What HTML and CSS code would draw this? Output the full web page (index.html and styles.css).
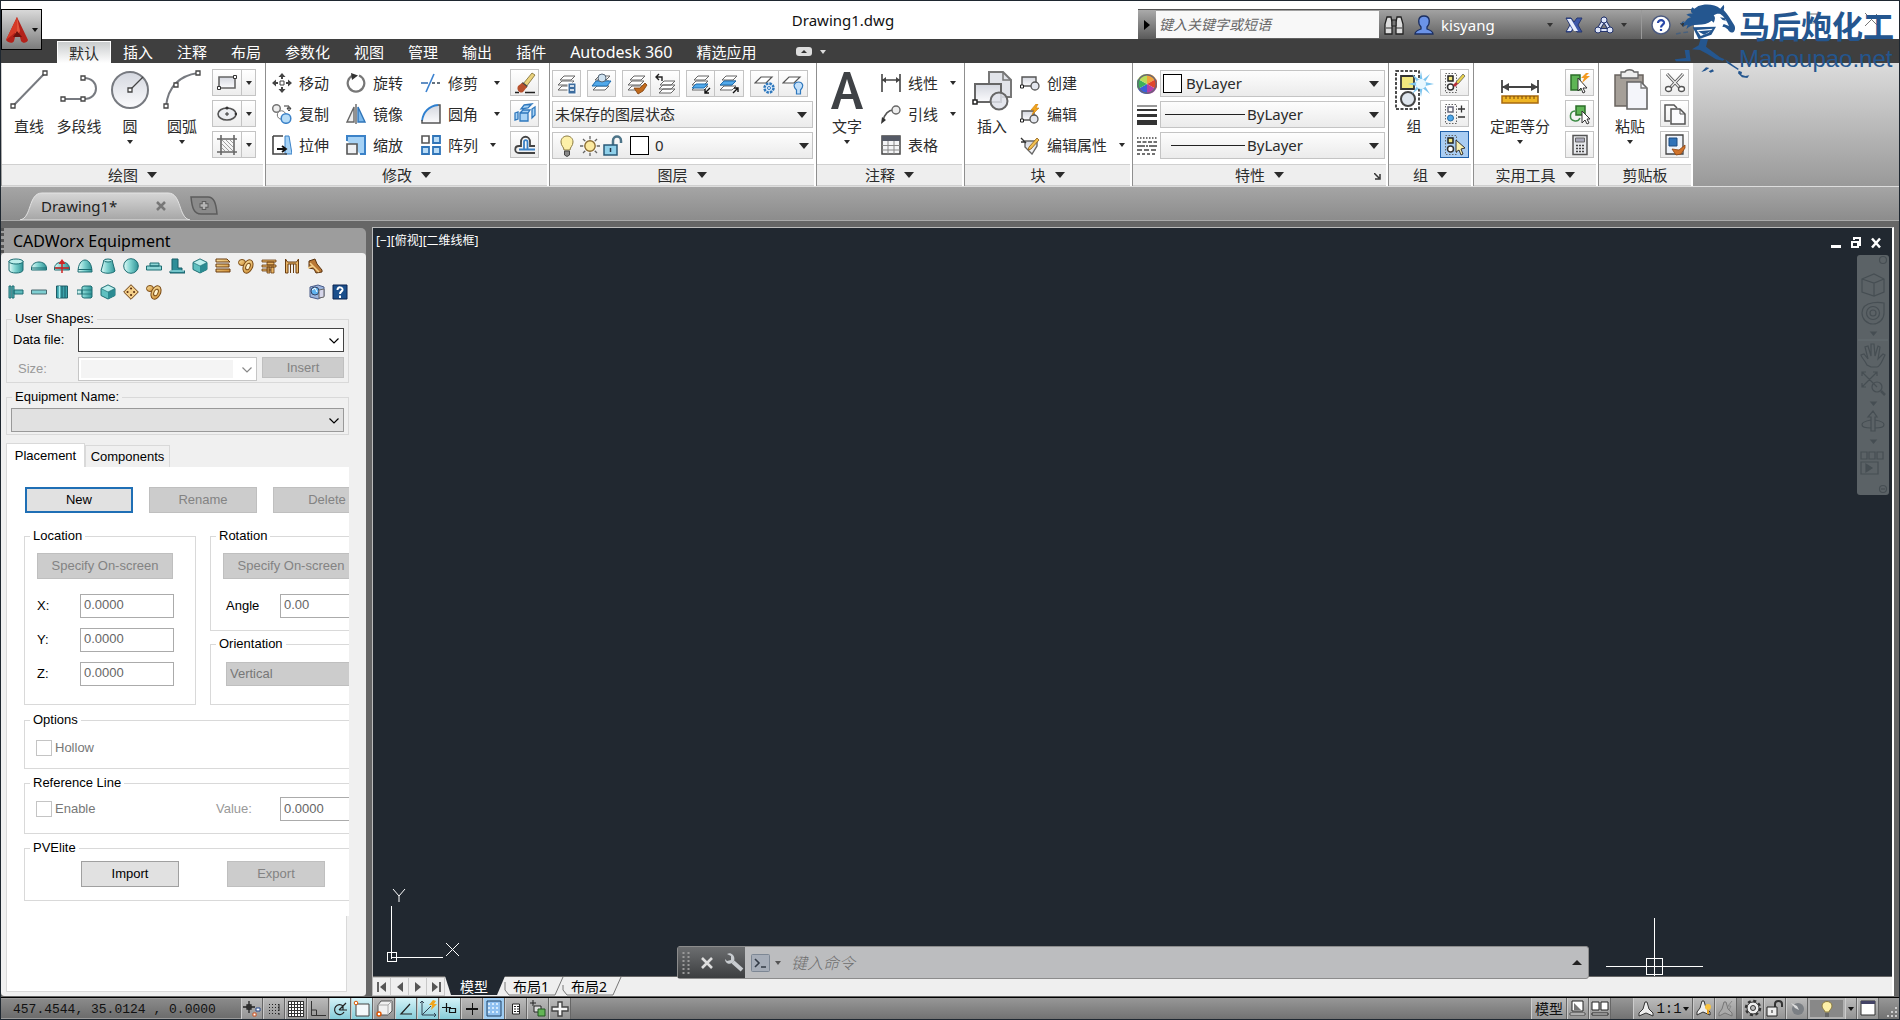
FILE: index.html
```html
<!DOCTYPE html>
<html lang="zh-CN">
<head>
<meta charset="utf-8">
<title>Drawing1.dwg</title>
<link rel="stylesheet" href="styles.css">
</head>
<body>
<svg class="sprite" aria-hidden="true">
<defs>
<linearGradient id="g-gray" x1="0" y1="0" x2="0" y2="1"><stop offset="0" stop-color="#d4d7df"/><stop offset="1" stop-color="#fbfbfd"/></linearGradient>
<linearGradient id="g-teal" x1="0" y1="0" x2="1" y2="0"><stop offset="0" stop-color="#e4fbf8"/><stop offset=".45" stop-color="#7fd3d0"/><stop offset="1" stop-color="#2f9396"/></linearGradient>
<linearGradient id="g-gold" x1="0" y1="0" x2="1" y2="1"><stop offset="0" stop-color="#fbe2a0"/><stop offset="1" stop-color="#cf8d33"/></linearGradient>
<symbol id="down" viewBox="0 0 8 6"><path d="M1 1h6L4 5z" fill="currentColor"/></symbol>
<symbol id="down-lg" viewBox="0 0 10 6"><path d="M0 0h10L5 6z" fill="currentColor"/></symbol>
<symbol id="chev" viewBox="0 0 10 6"><path d="M.5 .5 5 5 9.500 .5" fill="none" stroke="currentColor" stroke-width="1.200"/></symbol>
<symbol id="line" viewBox="0 0 40 42"><path d="M4 37 36 4" stroke="#777a80" stroke-width="2"/><g fill="#fff" stroke="#444" stroke-width="1.300"><path d="M2 35h4v4H2zM34 2h4v4h-4z"/></g></symbol>
<symbol id="pline" viewBox="0 0 40 42"><path d="M4 30h21c16 0 16-21 0-21" fill="none" stroke="#777a80" stroke-width="2"/><g fill="#fff" stroke="#444" stroke-width="1.300"><path d="M2 28h4v4H2zM22 28h4v4h-4zM22 7h4v4h-4z"/></g></symbol>
<symbol id="circle" viewBox="0 0 40 42"><circle cx="20" cy="21" r="18" fill="url(#g-gray)" stroke="#777a80" stroke-width="2"/><path d="M20 21 33 8" stroke="#444" stroke-width="1.300"/><path d="M18 19h4v4h-4z" fill="#fff" stroke="#444" stroke-width="1.300"/></symbol>
<symbol id="arc" viewBox="0 0 40 42"><path d="M4 37C6 20 15 7 36 4" fill="none" stroke="#777a80" stroke-width="2"/><g fill="#fff" stroke="#444" stroke-width="1.300"><path d="M2 35h4v4H2zM12 14h4v4h-4zM34 2h4v4h-4z"/></g></symbol>
<symbol id="rect" viewBox="0 0 20 20"><path d="M2 4h16v11H2z" fill="url(#g-gray)" stroke="#666" stroke-width="1.600"/><g fill="#fff" stroke="#333"><path d="M.5 13.500h3v3h-3zM16.500 2.500h3v3h-3z"/></g></symbol>
<symbol id="ellipse" viewBox="0 0 20 20"><ellipse cx="10" cy="10" rx="9" ry="6" fill="#eceef2" stroke="#555" stroke-width="1.600"/><path d="M8 10h4M10 8v4" stroke="#333"/><g fill="#333"><circle cx="10" cy="4" r="1.600"/><circle cx="19" cy="10" r="1.400"/></g></symbol>
<symbol id="hatch" viewBox="0 0 20 20"><path d="M4 0v20M0 4h20M17 0v20M0 17h20" stroke="#666" stroke-width="1.600"/><path d="M5 5l11 11M5 9l7 7M5 13l3 3M9 5l7 7M13 5l3 3" stroke="#888" stroke-width=".8"/></symbol>
<symbol id="move" viewBox="0 0 20 20"><path d="M10 0l3.500 4h-7zM10 20l3.500-4h-7zM0 10l4-3.500v7zM20 10l-4-3.500v7z" fill="#444"/><path d="M10 3v3M10 14v3M3 10h3M14 10h3" stroke="#444" stroke-width="2"/><path d="M8 8h4v4H8z" fill="#fff" stroke="#444"/></symbol>
<symbol id="rotate" viewBox="0 0 20 20"><path d="M7 2.500A8.300 8.300 0 1 0 13 2.500" fill="none" stroke="#777" stroke-width="2.200"/><path d="M5 0l7 2.500L6 7z" fill="#333"/></symbol>
<symbol id="trim" viewBox="0 0 20 20"><path d="M0 10h7" stroke="#2f6bb0" stroke-width="1.500"/><path d="M5 19 13 1" stroke="#3b82d0" stroke-width="1.600"/><path d="M11 10h9" stroke="#345" stroke-width="1.500" stroke-dasharray="3 2"/></symbol>
<symbol id="copy" viewBox="0 0 20 20"><circle cx="4.500" cy="4.500" r="3.800" fill="#eee" stroke="#777" stroke-width="1.500"/><circle cx="9.500" cy="11" r="4.200" fill="#fff" stroke="#777"/><circle cx="14" cy="14.500" r="4.800" fill="#b6dcf7" stroke="#3b82c8" stroke-width="1.500"/><path d="M12 2h5v3m-2-1h4l-2 3z" fill="none" stroke="#333"/></symbol>
<symbol id="mirror" viewBox="0 0 20 20"><path d="M8 3v15H1z" fill="#eee" stroke="#666" stroke-width="1.400"/><path d="M12 3v15h7z" fill="#7db9ec" stroke="#2f74b8" stroke-width="1.400"/><path d="M10 0v20" stroke="#222"/></symbol>
<symbol id="fillet" viewBox="0 0 20 20"><path d="M1 19V17C2 8 8 2 17 1h2v18z" fill="url(#g-gray)"/><path d="M1 17C2 8 8 2 17 1" fill="none" stroke="#2f80d0" stroke-width="1.800"/><path d="M17 1h2v18H1v-3" fill="none" stroke="#555" stroke-width="1.500"/></symbol>
<symbol id="stretch" viewBox="0 0 20 20"><path d="M13 1h4l3 18h-7z" fill="#a6d2f5" stroke="#3b82c8"/><path d="M1 1h10M1 1v18h14" fill="none" stroke="#444" stroke-width="1.600"/><path d="M5 14h8m-3-3 4 3-4 3" fill="none" stroke="#111" stroke-width="1.800"/></symbol>
<symbol id="scale" viewBox="0 0 20 20"><path d="M1 6V1h18v18h-5" fill="#a6d2f5" stroke="#3b82c8" stroke-width="2"/><path d="M1 9h10v10H1z" fill="#eef0f3" stroke="#555" stroke-width="1.600"/></symbol>
<symbol id="array" viewBox="0 0 20 20"><path d="M1 1h7v7H1z" fill="#fff" stroke="#555" stroke-width="1.600"/><path d="M12 1h7v7h-7zM1 12h7v7H1zM12 12h7v7h-7z" fill="#b9dcf7" stroke="#2f74b8" stroke-width="1.800"/></symbol>
<symbol id="erase" viewBox="0 0 22 22"><path d="M9 12 18 1l3 2-9 12z" fill="#ead27c" stroke="#7a6a30" stroke-width=".8"/><path d="M8 11l5 4" stroke="#444" stroke-width="2.500"/><path d="M4 14l4-3 5 4-4 5c-3 2-7-2-5-6z" fill="#b8502c"/><path d="M1 20.500h4M11 20.500h10" stroke="#222" stroke-width="1.300"/></symbol>
<symbol id="explode" viewBox="0 0 22 22"><g fill="#a9d4f6" stroke="#2f78bd" stroke-width="1.300"><path d="M6 10h8v8H6zM6 10l3-3h7l-2 3M10 2l8-1-4 4-7 1zM18 6l3-2v8l-3 3zM1 10l3-1v7l-3 1z"/></g></symbol>
<symbol id="offset" viewBox="0 0 22 22"><path d="M21 19H5c-5 0-5-7 0-7h2V8c0-7 9-7 9 0v4h5" fill="none" stroke="#444" stroke-width="1.800"/><path d="M21 15.500H5M10 15V8c0-2.500 3.500-2.500 3.500 0v7" fill="none" stroke="#3b82c8" stroke-width="1.800"/></symbol>
<symbol id="lay" viewBox="0 0 22 22"><g fill="#fff" stroke="#666"><path d="M2 17l4-4h12l-4 4zM2 12l4-4h12l-4 4zM4 7l4-4h11l-4 4z"/></g></symbol>
<symbol id="layprop" viewBox="0 0 22 22"><use href="#lay"/><path d="M12 10h8v11h-8z" fill="#3c6c9e" stroke="#fff"/><path d="M14 13h4M14 17h4" stroke="#fff" stroke-width="1.500"/></symbol>
<symbol id="laycur" viewBox="0 0 22 22"><use href="#lay"/><path d="M1 13l4-5h15l-4 5z" fill="#51a9ea" stroke="#1f6cae"/><circle cx="11" cy="5" r="4" fill="#cfe2f0" stroke="#567"/></symbol>
<symbol id="laymatch" viewBox="0 0 22 22"><use href="#lay"/><path d="M8 15l6 0 5-5 2 2-4 6-5 3z" fill="#c06a1d" stroke="#7d3d0a" stroke-width=".8"/></symbol>
<symbol id="layprev" viewBox="0 0 22 22"><g fill="#fff" stroke="#666"><path d="M5 20l4-4h12l-4 4zM5 16l4-4h12l-4 4zM6 12l4-4h11l-4 4z"/></g><path d="M8 8V4H2m3-3L2 4l3 3" fill="none" stroke="#222" stroke-width="1.400"/></symbol>
<symbol id="layiso" viewBox="0 0 22 22"><use href="#lay"/><path d="M2 15l4-4h12l-4 4z" fill="#51a9ea" stroke="#1f6cae"/><path d="M20 15l-5 5m0-4v4h4" fill="none" stroke="#111" stroke-width="1.400"/></symbol>
<symbol id="layuniso" viewBox="0 0 22 22"><use href="#lay"/><path d="M2 12l4-4h12l-4 4z" fill="#51a9ea" stroke="#1f6cae"/><path d="M15 20l5-5m-4 0h4v4" fill="none" stroke="#111" stroke-width="1.400"/></symbol>
<symbol id="layfrz" viewBox="0 0 22 22"><path d="M1 10l6-6h11l-6 6z" fill="#fff" stroke="#555" stroke-width="1.200"/><circle cx="15" cy="15" r="4.500" fill="#dcecfb" stroke="#2f78bd" stroke-width="2.500" stroke-dasharray="2.500 1"/><circle cx="15" cy="15" r="1.500" fill="#fff" stroke="#2f78bd"/></symbol>
<symbol id="layoff" viewBox="0 0 22 22"><path d="M1 10l6-6h11l-6 6z" fill="#fff" stroke="#555" stroke-width="1.200"/><path d="M14.500 17c-5-5-1-8 2-8 4 0 6 4 2 8v4h-4z" fill="#c3e0fa" stroke="#2f78bd" stroke-width="1.200"/></symbol>
<symbol id="bulb" viewBox="0 0 20 22"><path d="M7 15c0-3-3-4-3-8 0-8 12-8 12 0 0 4-3 5-3 8z" fill="#fdf0a8" stroke="#8a7a40"/><path d="M7.500 16h5v4l-2.500 1.500L7.500 20z" fill="#888" stroke="#444"/></symbol>
<symbol id="sun" viewBox="0 0 20 20"><path d="M10 0v20M0 10h20M3 3l14 14M17 3 3 17" stroke="#666" stroke-width="1.300"/><circle cx="10" cy="10" r="6.800" fill="#fff"/><circle cx="10" cy="10" r="5.200" fill="#fbe9a0" stroke="#8b6d33" stroke-width="1.400"/></symbol>
<symbol id="lock" viewBox="0 0 20 22"><path d="M10 10V6c0-6 8-6 8 0v2" fill="none" stroke="#4d7488" stroke-width="2.500"/><path d="M1 10h13v10H1z" fill="#8fd0ea" stroke="#2a5a78" stroke-width="1.500"/><path d="M7.500 13v4" stroke="#234" stroke-width="1.500"/></symbol>
<symbol id="bigA" viewBox="0 0 40 42"><path d="M4 40 17 3h6l13 37h-7l-3-10H14l-3 10zM15.500 25h9L20 10z" fill="#3f4246"/></symbol>
<symbol id="dimlin" viewBox="0 0 20 20"><path d="M1 1v18M19 1v18M1 7h18" stroke="#444" stroke-width="1.600"/><path d="M1 7l4-3v6zM19 7l-4-3v6z" fill="#444"/></symbol>
<symbol id="leader" viewBox="0 0 20 20"><path d="M2 17C3 10 8 6 12 6" fill="none" stroke="#555" stroke-width="1.600"/><circle cx="15" cy="6" r="4" fill="#eee" stroke="#666" stroke-width="1.400"/><path d="M0 20l1-7 4 3z" fill="#333"/></symbol>
<symbol id="table" viewBox="0 0 20 20"><path d="M1 1h18v18H1z" fill="#f4f5f7" stroke="#444" stroke-width="1.500"/><path d="M1 1h18v5H1z" fill="#555a66"/><path d="M7 6v13M13 6v13M1 10.500h18M1 15h18" stroke="#888"/></symbol>
<symbol id="insert" viewBox="0 0 40 42"><path d="M17 3h14l8 8v17H17z" fill="#e2e4ea" stroke="#777" stroke-width="2"/><path d="M31 3v8h8" fill="none" stroke="#777" stroke-width="1.500"/><path d="M3 15h26v18H3z" fill="url(#g-gray)" stroke="#666" stroke-width="2"/><circle cx="27" cy="32" r="8.500" fill="#dfe2ea" fill-opacity=".85" stroke="#666" stroke-width="2"/><path d="M1 31h4v4H1z" fill="#fff" stroke="#222" stroke-width="1.500"/></symbol>
<symbol id="bcreate" viewBox="0 0 20 20"><path d="M2 4h14v9H2z" fill="url(#g-gray)" stroke="#555" stroke-width="1.400"/><circle cx="15" cy="13" r="4" fill="#e4e7ee" stroke="#555" stroke-width="1.300"/><path d="M.5 12h3v3h-3z" fill="#fff" stroke="#222"/></symbol>
<symbol id="bedit" viewBox="0 0 20 20"><path d="M2 7h12v9H2z" fill="url(#g-gray)" stroke="#555" stroke-width="1.400"/><circle cx="14" cy="15" r="4" fill="#e4e7ee" stroke="#555" stroke-width="1.300"/><path d="M16 0l-5 6h3l-2 5 7-7h-3l2-4z" fill="#f2a51d" stroke="#c77a0a" stroke-width=".6"/><path d="M.5 15h3v3h-3z" fill="#fff" stroke="#222"/></symbol>
<symbol id="battr" viewBox="0 0 20 20"><path d="M5 6h12v5l-5 8-7-7z" fill="url(#g-gray)" stroke="#666" stroke-width="1.400"/><path d="M1 3l5 5M1 7l4 0" stroke="#333" stroke-width="1.400"/><path d="M9 12l8-9 2 2-8 9-3 1z" fill="#f2c050" stroke="#8b5a10" stroke-width=".8"/></symbol>
<symbol id="wheel" viewBox="0 0 20 20"><path d="M10 10V0a10 10 0 0 1 9 5z" fill="#f0a23c"/><path d="M10 10l9-5a10 10 0 0 1 0 10z" fill="#e0452c"/><path d="M10 10l9 5a10 10 0 0 1-9 5z" fill="#b13fa8"/><path d="M10 10v10a10 10 0 0 1-9-5z" fill="#3c60d8"/><path d="M10 10l-9 5A10 10 0 0 1 1 5z" fill="#3cb05a"/><path d="M10 10 1 5a10 10 0 0 1 9-5z" fill="#b9dc5b"/><circle cx="10" cy="10" r="9.300" fill="none" stroke="#667" stroke-width="1.400"/></symbol>
<symbol id="lweight" viewBox="0 0 20 20"><path d="M0 .5h20v1H0zM0 4h20v2H0zM0 9h20v3H0zM0 15h20v5H0z" fill="#333"/></symbol>
<symbol id="ltype" viewBox="0 0 20 20"><g stroke="#444" stroke-width="1.500"><path d="M0 2h20" stroke-dasharray="1.500 1.500"/><path d="M0 6h20" stroke-dasharray="4 1.500"/><path d="M0 10h20" stroke-dasharray="8 1 2 1"/><path d="M0 14h20" stroke-dasharray="5 2"/><path d="M0 18h20" stroke-dasharray="3 2"/></g></symbol>
<symbol id="group" viewBox="0 0 40 42"><path d="M2 2h23v38H2z" fill="none" stroke="#111" stroke-width="1.500" stroke-dasharray="3 1.500"/><path d="M7 7h13v13H7z" fill="#f2e77d" stroke="#333" stroke-width="1.800"/><circle cx="14" cy="30" r="7" fill="#dfe6ee" stroke="#444" stroke-width="2"/><path d="M27 2l1.500 9L36 5l-5 8 9 2-9 2 5 8-7.500-6L27 28l-1.500-9-7.500 6 5-8-9-2 9-2-5-8 7.500 6z" fill="#7cc4ee"/><circle cx="27" cy="15" r="5" fill="#e9f8ff"/></symbol>
<symbol id="gbase" viewBox="0 0 22 22"><path d="M1.500 1.500h11v19h-11z" fill="none" stroke="#666" stroke-dasharray="1.500 1.500"/><path d="M4 4h5v5H4z" fill="#f2e77d" stroke="#222" stroke-width="1.500"/><circle cx="6.500" cy="15" r="3" fill="#fff" stroke="#333" stroke-width="1.500"/></symbol>
<symbol id="gun" viewBox="0 0 22 22"><use href="#gbase"/><path d="M12 10l7-8 2 2-7 8z" fill="#e9d24b" stroke="#665" stroke-width=".8"/><path d="M9 13l3-3 2 2-3 3z" fill="#b8303a"/></symbol>
<symbol id="gedit" viewBox="0 0 22 22"><path d="M1.500 1.500h11v19h-11z" fill="none" stroke="#666" stroke-dasharray="1.500 1.500"/><path d="M4 4h5v5H4z" fill="#fff" stroke="#667" stroke-width="1.500"/><circle cx="6.500" cy="15" r="3" fill="#4fa8ea" stroke="#27699e"/><path d="M14 6h7M17.500 2.500v7M14 14h7" stroke="#333" stroke-width="1.300"/></symbol>
<symbol id="gsel" viewBox="0 0 22 22"><use href="#gbase"/><path d="M12 6v12l3-2 2 5 2-1-2-5 4-1z" fill="#f7efb0" stroke="#333"/></symbol>
<symbol id="measure" viewBox="0 0 40 42"><path d="M2 11v13M38 11v13M2 18h36" stroke="#444" stroke-width="1.800"/><path d="M2 18l7-4v8zM38 18l-7-4v8z" fill="#444"/><path d="M2 27h36v7H2z" fill="#efb524" stroke="#a8690f" stroke-width="1.500"/><path d="M6 27v3M10 27v3M14 27v3M18 27v3M22 27v3M26 27v3M30 27v3M34 27v3" stroke="#7a4a08"/></symbol>
<symbol id="qsel" viewBox="0 0 22 22"><path d="M2 3h9v15H2z" fill="#5fb556" stroke="#2d6e2a" stroke-width="1.500"/><path d="M9 6v13l3-3 2 5 2-1-2-4h4z" fill="#fff" stroke="#333"/><path d="M17 1l-5 5h3l-2 5 8-7h-4l3-3z" fill="#f39a1f"/></symbol>
<symbol id="selsim" viewBox="0 0 22 22"><path d="M7 3h9v9H7z" fill="#5fb556" stroke="#2d6e2a" stroke-width="1.500"/><path d="M6 8a5 5 0 1 0 5 7" fill="none" stroke="#3f8d48" stroke-width="1.500"/><path d="M13 8v12l3-3 2 4 2-1-2-4h3z" fill="#fff" stroke="#333"/></symbol>
<symbol id="calc" viewBox="0 0 22 22"><path d="M4 1.500h14v19H4z" fill="#e8eaee" stroke="#555" stroke-width="1.500"/><path d="M6.500 4h9v4h-9z" fill="#aab" stroke="#666"/><path d="M7 11.500h8M7 14.500h8M7 17.500h8" stroke="#444" stroke-width="1.600" stroke-dasharray="2 1"/></symbol>
<symbol id="paste" viewBox="0 0 40 42"><path d="M5 6h28v31H5z" fill="#a59f98" stroke="#69645f" stroke-width="1.500"/><path d="M11 3h4c1-3 8-3 9 0h4v6H11z" fill="#eee" stroke="#666" stroke-width="1.300"/><path d="M17 13h14l6 6v21H17z" fill="#f4f5fa" stroke="#666" stroke-width="1.600"/><path d="M31 13v6h6" fill="none" stroke="#777" stroke-width="1.300"/></symbol>
<symbol id="cut" viewBox="0 0 22 22"><path d="M3 2l13 14M19 2 6 16" stroke="#555" stroke-width="3"/><path d="M3 2l13 14M19 2 6 16" stroke="#eee" stroke-width="1.200"/><ellipse cx="4.500" cy="17" rx="3" ry="2.500" fill="#fff" stroke="#555" stroke-width="1.300"/><ellipse cx="17.500" cy="17" rx="3" ry="2.500" fill="#fff" stroke="#555" stroke-width="1.300"/></symbol>
<symbol id="copydoc" viewBox="0 0 22 22"><path d="M6 18H1V2h9l3 3" fill="none" stroke="#555" stroke-width="1.500"/><path d="M7 6h9l5 5v10H7z" fill="#fbfbfd" stroke="#555" stroke-width="1.500"/><path d="M16 6v5h5" fill="none" stroke="#555"/></symbol>
<symbol id="matchp" viewBox="0 0 22 22"><path d="M2 1h17v19H2z" fill="#eef3fa" stroke="#444" stroke-width="1.300"/><path d="M5 4h8v8H5z" fill="#2f72b8" stroke="#1c4b80"/><path d="M8 15l7 1 6-5v3l-4 6-5 1z" fill="#d0732a" stroke="#8b4210" stroke-width=".8"/></symbol>
<symbol id="cyl" viewBox="0 0 16 16"><path d="M1 3v9c0 4 14 4 14 0V3z" fill="url(#g-teal)" stroke="#1d6d72"/><ellipse cx="8" cy="3.500" rx="7" ry="2.500" fill="#bdeeeb" stroke="#1d6d72"/></symbol>
<symbol id="head" viewBox="0 0 16 16"><path d="M.5 10C1 2 15 2 15.500 10v2H.5z" fill="url(#g-teal)" stroke="#1d6d72"/><path d="M1 10h14" stroke="#1d6d72"/></symbol>
<symbol id="headred" viewBox="0 0 16 16"><use href="#head"/><path d="M8 15V3M1 10h14" stroke="#d02424" stroke-width="1.500"/><path d="M8 1 4.500 6h7z" fill="#d02424"/></symbol>
<symbol id="dome" viewBox="0 0 16 16"><path d="M1 14C1-2 15-2 15 14z" fill="url(#g-teal)" stroke="#1d6d72"/><path d="M1 11.500h14" stroke="#1d6d72"/></symbol>
<symbol id="cone" viewBox="0 0 16 16"><path d="M4 2h8l3 11c-2 3-12 3-14 0z" fill="url(#g-teal)" stroke="#1d6d72"/><ellipse cx="8" cy="2.500" rx="4" ry="1.500" fill="#bdeeeb" stroke="#1d6d72"/></symbol>
<symbol id="ball" viewBox="0 0 16 16"><circle cx="8" cy="8" r="7.300" fill="url(#g-teal)" stroke="#1d6d72"/></symbol>
<symbol id="flat" viewBox="0 0 16 16"><path d="M4 5h9v3H4zM.5 8h15v4H.5z" fill="#8fd6d6" stroke="#1d6d72"/></symbol>
<symbol id="base" viewBox="0 0 16 16"><path d="M3 1h6v9h4v3h3v2H1v-2h2z" fill="#2f8e98" stroke="#165d66"/><path d="M1 13h14" stroke="#bff"/></symbol>
<symbol id="box" viewBox="0 0 16 16"><path d="M1 4.500 8 1l7 3.500v7L8 15l-7-3.500z" fill="#5fc0c0" stroke="#1d6d72"/><path d="M8 8l7-3.500v7L8 15z" fill="#2b8b92"/><path d="M1 4.500 8 8l7-3.500L8 1z" fill="#bff0ee" stroke="#1d6d72" stroke-width=".7"/></symbol>
<symbol id="coil" viewBox="0 0 16 16"><path d="M1 1h11l3 3H1zM1 6h13v3H1zM1 11h14v3H1z" fill="url(#g-gold)" stroke="#6a3d10"/></symbol>
<symbol id="nozzle" viewBox="0 0 16 16"><ellipse cx="4" cy="4.500" rx="3.500" ry="3" fill="url(#g-gold)" stroke="#7a4a14"/><ellipse cx="10" cy="8.500" rx="4.500" ry="7" transform="rotate(25 10 8.500)" fill="url(#g-gold)" stroke="#7a4a14"/><ellipse cx="10" cy="8.500" rx="2" ry="3.500" transform="rotate(25 10 8.500)" fill="#fff4d0" stroke="#7a4a14"/></symbol>
<symbol id="ladder" viewBox="0 0 16 16"><path d="M1 2h14v2H1zM1 7h14v2H1zM6 4h7v3H6zM6 9h3v6H6zM10 9h3v6h-3zM1 11h8v2H1z" fill="#e8b566" stroke="#6a3d10" stroke-width=".8"/></symbol>
<symbol id="legs" viewBox="0 0 16 16"><path d="M1.500 1v14h2.500V6h8v9h2.500V1l-2 3h-9zM6.500 6v9M9.500 6v9" fill="#e8b566" stroke="#6a3d10"/></symbol>
<symbol id="saddle" viewBox="0 0 16 16"><path d="M2 3l6-2 2 5 5 6v2l-6 1-2-4-5-1z" fill="#b97836" stroke="#5a3410"/><path d="M3 5l9 9M1 10l5-2" stroke="#f3d08c" stroke-width="1.500"/></symbol>
<symbol id="flange" viewBox="0 0 16 16"><path d="M1 2h2v12H1zM4 2h2v12H4zM6 6h9v4H6z" fill="#5fb9bb" stroke="#1d6d72"/></symbol>
<symbol id="pipe" viewBox="0 0 16 16"><path d="M.5 6h15v4H.5z" fill="#7fcfd2" stroke="#4a6a70"/></symbol>
<symbol id="tubes" viewBox="0 0 16 16"><path d="M2.500 2h11v12h-11z" fill="#3aa1aa" stroke="#1d5d66"/><path d="M5.500 2v12" stroke="#aee" stroke-width="1.500"/><path d="M8 2v12M11 2v12" stroke="#1d5d66"/></symbol>
<symbol id="chan" viewBox="0 0 16 16"><path d="M0 6h5v4H0zM5 3l2-1h7l1 1v10l-1 1H7l-2-1z" fill="url(#g-teal)" stroke="#1d6d72"/><path d="M5 6h10M5 10h10" stroke="#1d6d72" stroke-width=".8"/></symbol>
<symbol id="dice" viewBox="0 0 16 16"><path d="M8 .7 15.300 8 8 15.300.7 8z" fill="#f4cf8a" stroke="#6a3d10"/><path d="M8 4.500h.1M8 11h.1M4.500 8h.1M11 8h.1" stroke="#5a3010" stroke-width="2" stroke-linecap="round"/></symbol>
<symbol id="config" viewBox="0 0 16 16"><path d="M1 3l8-2 6 2v9l-6 3-8-2z" fill="#9bb4dc" stroke="#485a88"/><circle cx="6" cy="7" r="4" fill="#5fb2ee" stroke="#346"/><path d="M10 6l5-1v8l-5 1z" fill="#d6d6ea" stroke="#666"/><path d="M3 6l3-2 2 4" stroke="#fff" fill="none"/></symbol>
</defs>
</svg>

<div class="app">
<header class="titlebar">
  <h1>Drawing1.dwg</h1>
  <button class="appbtn" aria-label="应用程序菜单"><svg width="24" height="28" viewBox="0 0 24 28"><path d="M12 1 1 24c2 3 7 4 8 1l1-4h5l1 4c2 3 6 2 7-1z" fill="#b3211a"/><path d="M12 1 9 15l3 6 3-6z" fill="#e2553c"/><path d="M12 1 1 24l11-9z" fill="#d63b28"/><path d="M8 21l4-6 5 6z" fill="#6e120d"/></svg><svg width="8" height="6"><use href="#down"/></svg></button>
  <div class="info">
    <button class="info-toggle" aria-label="展开"><svg width="6" height="10" viewBox="0 0 6 10"><path d="M0 0l6 5-6 5z" fill="#000"/></svg></button>
    <input type="text" class="search" aria-label="搜索" placeholder="键入关键字或短语">
    <button class="bin" aria-label="搜索"><svg width="20" height="20" viewBox="0 0 20 20"><path d="M3 2h4l1 5v12H1V9zM13 2h4l2 7v10h-7V7z" fill="#ddd" stroke="#222" stroke-width="1.300"/><path d="M8 5h4v6H8z" fill="#777" stroke="#222"/><path d="M2 13h6M12 13h6" stroke="#333"/></svg></button>
    <button class="user"><svg width="20" height="20" viewBox="0 0 20 20"><path d="M10 1c7 0 6 8 3 11v2c3 1 6 2 6 5H1c0-3 3-4 6-5v-2C4 9 3 1 10 1z" fill="#6b93e8" stroke="#1c2f60" stroke-width="1.300"/></svg><span>kisyang</span><svg width="8" height="6"><use href="#down"/></svg></button>
    <button class="xchg" aria-label="Exchange"><svg width="18" height="18" viewBox="0 0 18 18"><path d="M1 2h5l3 4 3-4h5l-4 7 4 7h-5l-3-4-3 4H1l4-7z" fill="#3c56a8" stroke="#26366e"/><path d="M2 3h4l7 12h-4z" fill="#e6ecfc"/><path d="M2 15l3-5 2 3-1 2z" fill="#e6ecfc"/></svg></button>
    <button class="a360" aria-label="Autodesk 360"><svg width="20" height="18" viewBox="0 0 20 18"><path d="M10 4 4 14h12z" fill="none" stroke="#26366e" stroke-width="4"/><path d="M10 4 4 14h12z" fill="none" stroke="#dfe6fa" stroke-width="2"/><g fill="#dfe6fa" stroke="#26366e"><circle cx="10" cy="4" r="3"/><circle cx="4" cy="14" r="3"/><circle cx="16" cy="14" r="3"/></g></svg><svg width="8" height="6"><use href="#down"/></svg></button>
    <button class="help" aria-label="帮助"><svg width="20" height="20" viewBox="0 0 20 20"><circle cx="10" cy="10" r="9" fill="#fff" stroke="#4b5a80" stroke-width="1.500"/><path d="M7 8c0-4 6.500-3.500 6 0-.5 2-3 2-3 4.500M10 14v2" fill="none" stroke="#2746a8" stroke-width="2.200"/></svg><svg width="8" height="6"><use href="#down"/></svg></button>
  </div>
  <div class="winbtns"><svg width="70" height="14" viewBox="0 0 70 14"><path d="M1 1h9v9H1zM58 0l13 13M71 0 58 13" fill="none" stroke="#777"/></svg></div>
  <div class="brand">
    <svg class="horse" width="84" height="76" viewBox="15 12 252 228"><g fill="#24568f"><path d="M45 66c6-10 10-12 18-14l-14-8c8-4 14-4 20-2-8-6-8-12-2-20l6 4 12-8c20-8 50-6 66 8l10-12c2 6 2 10 0 16 12 12 20 26 32 46 4 8 2 16-2 20-8 4-14 0-18-8-6-6-10-8-16-8l4-8 16 6c-6-14-14-28-26-36-8-2-14 0-20 4 6 6 4 14 0 22l-6-6c-12 10-26 12-40 12-16 0-28 4-36 14l4-14c-6 2-10 4-14 8l4-16-12 8c2-4 4-6 8-10z"/><path d="M150 52l14 2 4 8-10-2z"/><path d="M68 82l70-2-14 24-38 14zM80 90l12 18 24-10 12-12z" fill-rule="evenodd"/><path d="M84 94l44-4-26 14z"/><path d="M92 116l22 2-6 22 16 12 26 20 14 6-6 4-20-4-26-16-22-12-24-2 20-12zM14 178l34-4-4-24h14l4 34-44 0z"/><path d="M166 178l24 18 16 10-2 4-32-20zM94 216l14-14 10 2-12 8zM116 214l12-6 4 6-10 4zM206 212l10 4-2 8 12 4 12-2-6 8-16-2-12-12z"/></g><path d="M18 102l14-3M40 98l14-2" stroke="#24568f" stroke-width="4" opacity=".5"/></svg>
    <div class="brandtext"><strong>马后炮化工</strong><span>Mahoupao.net</span></div>
  </div>
</header>

<nav class="tabs">
  <button class="on">默认</button><button>插入</button><button>注释</button><button>布局</button><button>参数化</button><button>视图</button><button>管理</button><button>输出</button><button>插件</button><button class="latin">Autodesk 360</button><button>精选应用</button>
  <button class="mini" aria-label="最小化功能区"><svg width="32" height="10" viewBox="0 0 32 10"><rect width="16" height="9" rx="3" fill="#ddd"/><path d="M5 6l3-3 3 3z" fill="#333"/><path d="M24 3h6l-3 4z" fill="#ddd"/></svg></button>
</nav>

<section class="ribbon">
  <div class="panel p-draw"><div class="body">
    <button class="big w46"><svg width="40" height="42"><use href="#line"/></svg>直线</button>
    <button class="big w54"><svg width="40" height="42"><use href="#pline"/></svg>多段线</button>
    <button class="big w48"><svg width="40" height="42"><use href="#circle"/></svg>圆<svg width="8" height="6"><use href="#down"/></svg></button>
    <button class="big w56"><svg width="40" height="42"><use href="#arc"/></svg>圆弧<svg width="8" height="6"><use href="#down"/></svg></button>
    <div class="stack">
      <div class="split"><button aria-label="矩形"><svg width="20" height="20"><use href="#rect"/></svg></button><button aria-label="更多"><svg width="8" height="6"><use href="#down"/></svg></button></div>
      <div class="split"><button aria-label="椭圆"><svg width="20" height="20"><use href="#ellipse"/></svg></button><button aria-label="更多"><svg width="8" height="6"><use href="#down"/></svg></button></div>
      <div class="split"><button aria-label="图案填充"><svg width="20" height="20"><use href="#hatch"/></svg></button><button aria-label="更多"><svg width="8" height="6"><use href="#down"/></svg></button></div>
    </div>
  </div><h2>绘图<svg width="10" height="6"><use href="#down-lg"/></svg></h2></div>

  <div class="panel p-modify"><div class="body">
    <button class="tool"><svg width="20" height="20"><use href="#move"/></svg>移动</button>
    <button class="tool"><svg width="20" height="20"><use href="#rotate"/></svg>旋转</button>
    <button class="tool"><svg width="20" height="20"><use href="#trim"/></svg>修剪<svg class="dd" width="8" height="6"><use href="#down"/></svg></button>
    <button class="sq" aria-label="删除"><svg width="22" height="22"><use href="#erase"/></svg></button>
    <button class="tool"><svg width="20" height="20"><use href="#copy"/></svg>复制</button>
    <button class="tool"><svg width="20" height="20"><use href="#mirror"/></svg>镜像</button>
    <button class="tool"><svg width="20" height="20"><use href="#fillet"/></svg>圆角<svg class="dd" width="8" height="6"><use href="#down"/></svg></button>
    <button class="sq" aria-label="分解"><svg width="22" height="22"><use href="#explode"/></svg></button>
    <button class="tool"><svg width="20" height="20"><use href="#stretch"/></svg>拉伸</button>
    <button class="tool"><svg width="20" height="20"><use href="#scale"/></svg>缩放</button>
    <button class="tool"><svg width="20" height="20"><use href="#array"/></svg>阵列<svg class="dd near" width="8" height="6"><use href="#down"/></svg></button>
    <button class="sq" aria-label="偏移"><svg width="22" height="22"><use href="#offset"/></svg></button>
  </div><h2>修改<svg width="10" height="6"><use href="#down-lg"/></svg></h2></div>

  <div class="panel p-layers"><div class="body">
    <div class="layrow">
      <button class="sq" aria-label="图层特性"><svg width="22" height="22"><use href="#layprop"/></svg></button>
      <button class="sq" aria-label="置为当前"><svg width="22" height="22"><use href="#laycur"/></svg></button>
      <div class="pair"><button class="sq" aria-label="匹配图层"><svg width="22" height="22"><use href="#laymatch"/></svg></button><button class="sq" aria-label="上一个"><svg width="22" height="22"><use href="#layprev"/></svg></button></div>
      <div class="pair"><button class="sq" aria-label="隔离"><svg width="22" height="22"><use href="#layiso"/></svg></button><button class="sq" aria-label="取消隔离"><svg width="22" height="22"><use href="#layuniso"/></svg></button></div>
      <div class="pair"><button class="sq" aria-label="冻结"><svg width="22" height="22"><use href="#layfrz"/></svg></button><button class="sq" aria-label="关闭"><svg width="22" height="22"><use href="#layoff"/></svg></button></div>
    </div>
    <div class="combo"><select aria-label="图层状态"><option>未保存的图层状态</option></select><svg width="10" height="6"><use href="#down-lg"/></svg></div>
    <div class="combo icons"><svg width="20" height="22"><use href="#bulb"/></svg><svg width="20" height="20"><use href="#sun"/></svg><svg width="20" height="22"><use href="#lock"/></svg><i class="swatch"></i><select aria-label="图层"><option>0</option></select><svg width="10" height="6"><use href="#down-lg"/></svg></div>
  </div><h2>图层<svg width="10" height="6"><use href="#down-lg"/></svg></h2></div>

  <div class="panel p-annot"><div class="body">
    <button class="big w56"><svg width="40" height="42"><use href="#bigA"/></svg>文字<svg width="8" height="6"><use href="#down"/></svg></button>
    <div class="stack">
      <button class="tool"><svg width="20" height="20"><use href="#dimlin"/></svg>线性<svg class="dd near" width="8" height="6"><use href="#down"/></svg></button>
      <button class="tool"><svg width="20" height="20"><use href="#leader"/></svg>引线<svg class="dd near" width="8" height="6"><use href="#down"/></svg></button>
      <button class="tool"><svg width="20" height="20"><use href="#table"/></svg>表格</button>
    </div>
  </div><h2>注释<svg width="10" height="6"><use href="#down-lg"/></svg></h2></div>

  <div class="panel p-block"><div class="body">
    <button class="big w48"><svg width="40" height="42"><use href="#insert"/></svg>插入</button>
    <div class="stack">
      <button class="tool"><svg width="20" height="20"><use href="#bcreate"/></svg>创建</button>
      <button class="tool"><svg width="20" height="20"><use href="#bedit"/></svg>编辑</button>
      <button class="tool"><svg width="20" height="20"><use href="#battr"/></svg>编辑属性<svg class="dd near" width="8" height="6"><use href="#down"/></svg></button>
    </div>
  </div><h2>块<svg width="10" height="6"><use href="#down-lg"/></svg></h2></div>

  <div class="panel p-props"><div class="body">
    <svg width="20" height="20"><use href="#wheel"/></svg>
    <div class="combo"><i class="swatch"></i><select aria-label="颜色"><option>ByLayer</option></select><svg width="10" height="6"><use href="#down-lg"/></svg></div>
    <svg width="20" height="20"><use href="#lweight"/></svg>
    <div class="combo"><i class="rule"></i><select aria-label="线宽"><option>ByLayer</option></select><svg width="10" height="6"><use href="#down-lg"/></svg></div>
    <svg width="20" height="20"><use href="#ltype"/></svg>
    <div class="combo"><i class="rule short"></i><select aria-label="线型"><option>ByLayer</option></select><svg width="10" height="6"><use href="#down-lg"/></svg></div>
  </div><h2>特性<svg width="10" height="6"><use href="#down-lg"/></svg><svg class="launch" width="7" height="7" viewBox="0 0 7 7"><path d="M0 0l5 5M6 1v5H1" stroke="#333" stroke-width="1.500" fill="none"/></svg></h2></div>

  <div class="panel p-group"><div class="body">
    <button class="big w48"><svg width="40" height="42"><use href="#group"/></svg>组</button>
    <div class="stack">
      <button class="sq" aria-label="解除编组"><svg width="22" height="22"><use href="#gun"/></svg></button>
      <button class="sq" aria-label="组编辑"><svg width="22" height="22"><use href="#gedit"/></svg></button>
      <button class="sq on" aria-label="启用组选择"><svg width="22" height="22"><use href="#gsel"/></svg></button>
    </div>
  </div><h2>组<svg width="10" height="6"><use href="#down-lg"/></svg></h2></div>

  <div class="panel p-util"><div class="body">
    <button class="big w90"><svg width="40" height="42"><use href="#measure"/></svg>定距等分<svg width="8" height="6"><use href="#down"/></svg></button>
    <div class="stack">
      <button class="sq" aria-label="快速选择"><svg width="22" height="22"><use href="#qsel"/></svg></button>
      <button class="sq" aria-label="选择类似"><svg width="22" height="22"><use href="#selsim"/></svg></button>
      <button class="sq" aria-label="计算器"><svg width="22" height="22"><use href="#calc"/></svg></button>
    </div>
  </div><h2>实用工具<svg width="10" height="6"><use href="#down-lg"/></svg></h2></div>

  <div class="panel p-clip"><div class="body">
    <button class="big w56"><svg width="40" height="42"><use href="#paste"/></svg>粘贴<svg width="8" height="6"><use href="#down"/></svg></button>
    <div class="stack">
      <button class="sq" aria-label="剪切"><svg width="22" height="22"><use href="#cut"/></svg></button>
      <button class="sq" aria-label="复制"><svg width="22" height="22"><use href="#copydoc"/></svg></button>
      <button class="sq" aria-label="特性匹配"><svg width="22" height="22"><use href="#matchp"/></svg></button>
    </div>
  </div><h2>剪贴板</h2></div>
</section>

<nav class="docs">
  <div class="doc"><svg class="docshape" width="170" height="28" viewBox="0 0 170 28"><defs><linearGradient id="g-doc" x1="0" y1="0" x2="0" y2="1"><stop offset="0" stop-color="#d6d6d6"/><stop offset="1" stop-color="#a6a6a6"/></linearGradient></defs><path d="M0 28C12 26 8 1 22 1h126c14 0 10 25 22 27z" fill="url(#g-doc)" stroke="#e4e4e4"/></svg><a href="#canvas">Drawing1*</a><button aria-label="关闭"><svg width="10" height="10" viewBox="0 0 10 10"><path d="M1 1l8 8M9 1 1 9" stroke="#777" stroke-width="2.500"/></svg></button></div>
  <button class="newdoc" aria-label="新图形"><svg width="28" height="20" viewBox="0 0 28 20"><path d="M1 1h17c6 0 8 6 9 17H11C4 18 2 12 1 1z" fill="#8a8a8a" stroke="#5c5c5c" stroke-width="1.500"/><path d="M14 5v9M9.500 9.500h9" stroke="#5c5c5c" stroke-width="4.500"/><path d="M14 6v7M10.500 9.500h7" stroke="#b5b5b5" stroke-width="2.500"/></svg></button>
</nav>

<main class="work">
<aside class="side">
  <h2>CADWorx Equipment</h2>
  <div class="eq">
    <div class="eqrow"><svg width="16" height="16"><use href="#cyl"/></svg><svg width="16" height="16"><use href="#head"/></svg><svg width="16" height="16"><use href="#headred"/></svg><svg width="16" height="16"><use href="#dome"/></svg><svg width="16" height="16"><use href="#cone"/></svg><svg width="16" height="16"><use href="#ball"/></svg><svg width="16" height="16"><use href="#flat"/></svg><svg width="16" height="16"><use href="#base"/></svg><svg width="16" height="16"><use href="#box"/></svg><svg width="16" height="16"><use href="#coil"/></svg><svg width="16" height="16"><use href="#nozzle"/></svg><svg width="16" height="16"><use href="#ladder"/></svg><svg width="16" height="16"><use href="#legs"/></svg><svg width="16" height="16"><use href="#saddle"/></svg></div>
    <div class="eqrow"><svg width="16" height="16"><use href="#flange"/></svg><svg width="16" height="16"><use href="#pipe"/></svg><svg width="16" height="16"><use href="#tubes"/></svg><svg width="16" height="16"><use href="#chan"/></svg><svg width="16" height="16"><use href="#box"/></svg><svg width="16" height="16"><use href="#dice"/></svg><svg width="16" height="16"><use href="#nozzle"/></svg><svg class="push" width="16" height="16"><use href="#config"/></svg><svg width="16" height="16" viewBox="0 0 16 16"><path d="M1 1h14v14H1z" fill="#1b4f8c" stroke="#0c2450"/><path d="M5.500 6c0-4 5.500-3 5 0-.4 1.500-2.500 1.500-2.500 4M8 11.500V14" stroke="#fff" stroke-width="2" fill="none"/></svg></div>
    <fieldset class="shapes"><legend>User Shapes:</legend>
      <div class="row"><label for="df">Data file:</label><span class="sel"><select id="df"></select><svg width="10" height="6"><use href="#chev"/></svg></span></div>
      <div class="row off"><label for="sz">Size:</label><span class="sel size"><select id="sz" disabled></select><svg width="10" height="6"><use href="#chev"/></svg></span><button class="btn" disabled>Insert</button></div>
    </fieldset>
    <fieldset class="ename"><legend>Equipment Name:</legend><span class="sel gray"><select aria-label="Equipment Name"></select><svg width="10" height="6"><use href="#chev"/></svg></span></fieldset>
    <div class="ptabs"><button class="on">Placement</button><button>Components</button></div>
    <div class="page"><div class="dialog">
      <div class="acts"><button class="btn new">New</button><button class="btn" disabled>Rename</button><button class="btn" disabled>Delete</button></div>
      <div class="cols">
        <fieldset class="loc"><legend>Location</legend>
          <button class="btn spec" disabled>Specify On-screen</button>
          <div class="coords">
            <label for="lx">X:</label><input id="lx" type="text" value="0.0000">
            <label for="ly">Y:</label><input id="ly" type="text" value="0.0000">
            <label for="lz">Z:</label><input id="lz" type="text" value="0.0000">
          </div>
        </fieldset>
        <div class="right">
          <fieldset class="rot"><legend>Rotation</legend>
            <button class="btn spec" disabled>Specify On-screen</button>
            <div class="angle"><label for="an">Angle</label><input id="an" type="text" value="0.00"></div>
          </fieldset>
          <fieldset class="ori"><legend>Orientation</legend><select aria-label="Orientation" disabled><option>Vertical</option></select></fieldset>
        </div>
      </div>
      <fieldset class="opt"><legend>Options</legend><label class="check"><input type="checkbox" disabled>Hollow</label></fieldset>
      <fieldset class="ref"><legend>Reference Line</legend><label class="check"><input type="checkbox" disabled>Enable</label><label class="val" for="rv">Value:</label><input id="rv" type="text" value="0.0000"></fieldset>
      <fieldset class="pve"><legend>PVElite</legend><button class="btn">Import</button><button class="btn" disabled>Export</button></fieldset>
    </div></div>
  </div>
</aside>

<section class="draw">
  <div class="view" id="canvas">
    <span class="vlabel">[−][俯视][二维线框]</span>
    <svg class="vwin" width="52" height="12" viewBox="0 0 52 12"><path d="M0 8h10v3H0z" fill="#fff"/><path d="M21 5h6v5h-6zM23 3V1h6v7h-1" fill="none" stroke="#fff" stroke-width="2"/><path d="M41 1.500l8 9M49 1.500l-8 9" stroke="#fff" stroke-width="2.500"/></svg>
    <div class="nav"><svg width="32" height="240" viewBox="0 0 32 240" fill="none" stroke="#464e53" stroke-width="1.200"><circle cx="26" cy="5" r="3.500"/><path d="M5 24l12-5 10 5v13l-10 4-12-4zM5 24l12 4 10-4M17 28v13"/><path d="M5 58c0-14 22-10 22-10v10a11 11 0 0 1-22 0z"/><circle cx="16" cy="58" r="6.500"/><circle cx="16" cy="58" r="3"/><path d="M14 77h5l-2.500 3zM14 147h5l-2.500 3zM14 185h5l-2.500 3z" fill="#464e53"/><path d="M1 85h30" stroke="#666d71"/><path d="M10 110c-3-6-6-8-6-10l3-1 4 5-3-12 3-1 3 10V89h3l1 12 3-10 2 1-2 12 5-5 2 1c-3 6-5 12-8 12h-6z"/><path d="M5 117l15 15M20 117 5 132M5 121v-4h4M16 117h4v4M5 128v4h4"/><circle cx="20" cy="132" r="5"/><path d="M24 136l4 4" stroke-width="2.500"/><path d="M14 176v-14h-3l5-6 4 6h-2v14zM14 165c-12 2-12 8 0 8M18 165c12 2 12 8 0 8"/><path d="M4 197h6v7H4zM12 197h6v7h-6zM20 197h6v7h-6zM4 207h17v12H4z"/><path d="M9 209v8l6-4z" fill="#464e53"/><circle cx="26" cy="234" r="3.500"/><path d="M24 234h4"/></svg></div>
    <svg class="ucs" width="74" height="76" viewBox="0 0 74 76" fill="none" stroke="#fff" shape-rendering="crispEdges"><path d="M4.500 19v53M4 70.500h52M.5 65.500h9v9h-9z"/><path d="M6 2l6 7 6-7M12 9v6M59 56l13 13M72 56 59 69" shape-rendering="auto"/></svg>
    <svg class="cross" width="97" height="58" viewBox="0 0 97 58" fill="none" stroke="#fff" shape-rendering="crispEdges"><path d="M48.500 0v58M0 48.500h97M40.500 40.500h16v16h-16z"/></svg>
    <div class="cmd">
      <div class="cmdl"><svg width="8" height="22" viewBox="0 0 8 22"><path d="M1.500 0v22M6.500 0v22" stroke="#999" stroke-width="2" stroke-dasharray="2 2"/></svg><button aria-label="关闭"><svg width="12" height="12" viewBox="0 0 12 12"><path d="M1 1l10 10M11 1 1 11" stroke="#ddd" stroke-width="2.600"/></svg></button><button class="wrench" aria-label="自定义"><svg width="20" height="20" viewBox="0 0 20 20"><path d="M9 9l9 8" stroke="#c8ccd0" stroke-width="4"/><path d="M3 1l4 2v4L3 8 1 6c0 4 4 6 7 4 3-1 3-6 1-8-2-2-4-2-6-1z" fill="#c8ccd0"/></svg></button></div>
      <button class="prompt" aria-label="最近的命令"><svg width="19" height="18" viewBox="0 0 19 18"><rect x=".5" y=".5" width="18" height="17" rx="1" fill="#a6adb8" stroke="#7d8794"/><path d="M4 5l4 4-4 4M10 13h5" fill="none" stroke="#333b46" stroke-width="1.600"/></svg><svg width="8" height="6"><use href="#down"/></svg></button>
      <input type="text" aria-label="命令" placeholder="键入命令">
      <svg width="10" height="5" viewBox="0 0 10 5"><path d="M0 5 5 0l5 5z" fill="#222"/></svg>
    </div>
  </div>
  <div class="layouts">
    <button class="nb" aria-label="第一个"><svg width="10" height="10" viewBox="0 0 10 10"><path d="M9 0v10L3 5z" fill="#555"/><path d="M1 0v10" stroke="#333" stroke-width="1.500"/></svg></button><button class="nb" aria-label="上一个"><svg width="10" height="10" viewBox="0 0 10 10"><path d="M8 0v10L2 5z" fill="#555"/></svg></button><button class="nb" aria-label="下一个"><svg width="10" height="10" viewBox="0 0 10 10"><path d="M2 0v10l6-5z" fill="#555"/></svg></button><button class="nb" aria-label="最后一个"><svg width="10" height="10" viewBox="0 0 10 10"><path d="M1 0v10l6-5z" fill="#555"/><path d="M9 0v10" stroke="#333" stroke-width="1.500"/></svg></button>
    <button class="lt model"><svg viewBox="0 0 60 19"><path d="M0-1h60l-8 19H6z" fill="#212830"/></svg><span>模型</span></button>
    <button class="lt"><svg viewBox="0 0 60 19"><path d="M2 5v8l4 5h46l8-18" fill="none" stroke="#777"/></svg><span>布局1</span></button>
    <button class="lt"><svg viewBox="0 0 60 19"><path d="M2 8v5l4 5h46l8-18" fill="none" stroke="#777"/></svg><span>布局2</span></button>
  </div>
</section>
</main>

<footer class="status">
  <span class="xyz">457.4544, 35.0124 , 0.0000</span>
  <div class="sb">
  <button aria-label="推断约束"><svg viewBox="0 0 20 20"><path d="M1 8h12M7 2v12M5 6h4v4H5z" fill="none" stroke="#222" stroke-width="1.300"/><path d="M14 9h4v3h-4z" fill="#fff" stroke="#248"/><path d="M11 14h3v3h-3z" fill="#fff" stroke="#c52"/></svg></button>
  <button aria-label="捕捉"><svg viewBox="0 0 20 20"><path d="M5 5.500h10M5 8.500h10M5 11.500h10M5 14.500h10" stroke="#222" stroke-dasharray="1 2"/><path d="M15 5v7M15 14v2" stroke="#222"/></svg></button>
  <button aria-label="栅格"><svg viewBox="0 0 20 20"><path d="M2 2h16v16H2z" fill="#fff"/><path d="M2 2.500h16M2 5.500h16M2 8.500h16M2 11.500h16M2 14.500h16M2 17.500h16M2.500 2v16M5.500 2v16M8.500 2v16M11.500 2v16M14.500 2v16M17.500 2v16" stroke="#333"/></svg></button>
  <button aria-label="正交"><svg viewBox="0 0 20 20"><path d="M3.500 2v14.500H18M3.500 11h5v5" fill="none" stroke="#333"/></svg></button>
  <button class="on" aria-label="极轴"><svg viewBox="0 0 20 20"><path d="M13 7a5 5 0 1 0 1 6M9 11h8M9 11l7-7M13 7v4" fill="none" stroke="#222" stroke-width="1.200"/></svg></button>
  <button class="on" aria-label="对象捕捉"><svg viewBox="0 0 20 20"><path d="M4 5h13v12H4z" fill="#f3f8fb" stroke="#444"/><circle cx="4" cy="4" r="1.800" fill="#fff" stroke="#d50"/></svg></button>
  <button aria-label="三维对象捕捉"><svg viewBox="0 0 20 20"><path d="M4 6l3-4h11v10l-4 4H4z" fill="#f1f1f1" stroke="#555"/><path d="M4 6h10v10M14 6l4-4" fill="none" stroke="#aaa"/><circle cx="5" cy="15" r="2" fill="#fff" stroke="#d50" stroke-width="1.400"/></svg></button>
  <button class="on" aria-label="对象追踪"><svg viewBox="0 0 20 20"><path d="M14 5 5 15h11" fill="none" stroke="#222" stroke-width="1.200"/></svg></button>
  <button class="on" aria-label="动态UCS"><svg viewBox="0 0 20 20"><path d="M4 2v14h14M4 16l9-9M2 4l2-2 2 2M16 14l2 2-2 2" fill="none" stroke="#345"/><path d="M15 1l-4 5h3l-1 5 6-6h-3l2-3z" fill="#f2a51d"/></svg></button>
  <button class="on" aria-label="动态输入"><svg viewBox="0 0 20 20"><path d="M2 8.500h9M6.500 4v9M9.500 9.500h6v4h-6z" fill="none" stroke="#111" stroke-width="1.200"/></svg></button>
  <button aria-label="线宽"><svg viewBox="0 0 20 20"><path d="M4 10h12" stroke="#111" stroke-width="2"/><path d="M10.500 4v12" stroke="#111"/></svg></button>
  <button class="on tp" aria-label="透明度"><svg viewBox="0 0 20 20"><path d="M3 2h14v15H3z" fill="#8fc0f0" stroke="#246"/><path d="M4 5h12M4 9h12M4 13h12" stroke="#d5eafc" stroke-width="2" stroke-dasharray="2 2"/></svg></button>
  <button aria-label="快捷特性"><svg viewBox="0 0 20 20"><path d="M6.500 5h7v10h-7z" fill="#fff" stroke="#222"/><path d="M8 7.500h5M8 10h5M8 12.500h5" stroke="#222" stroke-dasharray="2 1"/></svg></button>
  <button aria-label="选择循环"><svg viewBox="0 0 20 20"><path d="M2 4h6M5 1v6" stroke="#222"/><path d="M6 7h7v6H6z" fill="#ddd" stroke="#222"/><path d="M10 10h7v7h-7z" fill="#63b455" stroke="#252"/></svg></button>
  <button aria-label="注释监视器"><svg viewBox="0 0 20 20"><path d="M8 3h4v5h6v4h-6v5H8v-5H2V8h6z" fill="#f4f4f4" stroke="#444" stroke-width="1.400"/></svg></button>
  </div>
  <div class="sb end">
  <button class="txt">模型</button>
  <button aria-label="快速查看布局"><svg viewBox="0 0 20 20"><path d="M4 2h11v10H4z" fill="#fff" stroke="#222"/><path d="M6 4v7h7z" fill="#777"/><path d="M2 14h15v2H2z" fill="#fff" stroke="#333" stroke-width=".8"/></svg></button>
  <button aria-label="快速查看图形"><svg viewBox="0 0 20 20"><path d="M2 3h7v8H2zM11 3h7v8h-7zM2 14h16v2H2z" fill="#fff" stroke="#222"/></svg></button>
  <span class="gap22"></span>
  <button class="scale"><svg viewBox="0 0 20 20"><path d="M9 3h2l2 7 4 4v3l-7-3-7 3v-3l4-4z" fill="#eee" stroke="#333"/></svg>1:1<svg class="dd" viewBox="0 0 8 6"><use href="#down"/></svg></button>
  <button aria-label="注释可见性"><svg viewBox="0 0 20 20"><path d="M8 2h2l2 7 4 4v3l-7-3-6 3v-3l3-4z" fill="#eee" stroke="#333"/><circle cx="14" cy="8" r="3" fill="#f8c341"/><path d="M13 11h2v4h-2z" fill="#e8a020"/></svg></button>
  <button aria-label="自动缩放"><svg viewBox="0 0 20 20"><path d="M8 3h2l2 7 4 4v3l-7-3-6 3v-3l3-4z" fill="#aaa" stroke="#777"/><path d="M16 2l-4 5h3l-2 4" fill="none" stroke="#888"/></svg></button>
  <span class="gap5"></span>
  <button aria-label="切换工作空间"><svg viewBox="0 0 20 20"><circle cx="10" cy="9" r="7" fill="none" stroke="#333" stroke-width="2.500" stroke-dasharray="3 2.500"/><circle cx="10" cy="9" r="6" fill="#eee" stroke="#333"/><circle cx="10" cy="9" r="2.500" fill="#bbb" stroke="#333"/></svg></button>
  <button aria-label="锁定"><svg viewBox="0 0 20 20"><path d="M10 8V5c0-4 7-4 7 0v3" fill="none" stroke="#333" stroke-width="2"/><path d="M2 8h10v9H2z" fill="#eee" stroke="#222"/><path d="M7 11v3" stroke="#222"/></svg></button>
  <button aria-label="硬件加速"><svg viewBox="0 0 20 20"><circle cx="11" cy="10" r="6" fill="#7b7f84"/><path d="M4 4l4 5 4 2-2-4z" fill="#ddd"/></svg></button>
  <button class="wide" aria-label="隔离对象"><svg viewBox="0 0 20 20"><path d="M8 13c0-2-3-3-3-6 0-6 10-6 10 0 0 3-3 4-3 6z" fill="#fdf0a8" stroke="#8a7a40"/><path d="M8 14h4v4H8z" fill="#666"/></svg></button>
  <button class="nar" aria-label="更多"><svg viewBox="0 0 8 6"><use href="#down"/></svg></button>
  <button aria-label="全屏显示"><svg viewBox="0 0 20 20"><path d="M3 2h14v14H3z" fill="#fff" stroke="#333"/><path d="M3 2h14v3H3z" fill="#446"/></svg></button>
  <svg class="grip" width="16" height="16" viewBox="0 0 16 16"><path d="M13 4v12M9 8v8M5 12v4" stroke="#ccc" stroke-width="2" stroke-dasharray="2 2"/></svg>
  </div>
</footer>
</div>
</body>
</html>
```
FILE: styles.css
```css
* { box-sizing: border-box; }
body { margin: 0; background: #1e2730; color: #2b2b2b; font: 15px/18px "Noto Sans", "Noto Sans CJK SC", sans-serif; }
button, input, select { font: inherit; color: inherit; margin: 0; padding: 0; border: 0; background: none; border-radius: 0; }
button { cursor: pointer; }
h1, h2 { margin: 0; font-weight: 400; font-size: 15px; }
svg { display: block; flex: none; }
.sprite { position: absolute; width: 0; height: 0; }
.app { display: flex; flex-direction: column; min-height: 100vh; padding: 1px; background: #1e2730; }

/* title bar */
.titlebar { position: relative; height: 38px; display: flex; align-items: flex-end; background: #fff; color: #111; }
.titlebar h1 { position: absolute; left: 0; right: 214px; top: 9px; text-align: center; line-height: 20px; }
.appbtn { position: absolute; z-index: 3; left: 0; top: 8px; width: 41px; height: 41px; border: 1px solid #000; background: linear-gradient(#d8d8d8, #7c7c7c); display: flex; align-items: center; justify-content: center; gap: 2px; }
.info { margin-left: auto; margin-right: 205px; width: 556px; height: 30px; display: flex; align-items: center; background: linear-gradient(#a2a2a2, #5f5f5f); border-top: 1px solid #555; color: #333; }
.info button { height: 29px; display: flex; align-items: center; }
.info-toggle { width: 18px; justify-content: center; background: linear-gradient(#aaa, #5a5a5a); }
.search { width: 223px; height: 27px; padding: 0 3px; background: #f8f8f8; font-size: 14px; font-style: italic; }
.search::placeholder { color: #666; opacity: 1; }
.bin { margin-left: 5px; }
.user { width: 144px; margin-left: 10px; gap: 7px; color: #fff; }
.user svg:last-child { margin-left: auto; color: #333; margin-right: 4px; }
.xchg { margin-left: 7px; }
.a360 { margin-left: 11px; gap: 6px; width: 48px; border-right: 1px solid #999; }
.help { margin-left: 9px; gap: 8px; }
.winbtns { position: absolute; right: 22px; top: 12px; }
.brand { position: absolute; z-index: 2; right: 5px; top: 3px; display: flex; color: #24568f; }
.horse { margin-right: -20px; }
.brandtext { width: 155px; display: flex; flex-direction: column; }
.brandtext strong { font-size: 31px; line-height: 40px; margin-top: 2px; }
.brandtext span { font: 24px/26px "Liberation Sans", sans-serif; }

/* ribbon tabs */
.tabs { height: 24px; padding-left: 56px; display: flex; align-items: flex-end; background: #3f3f3f; color: #fff; }
.tabs button { height: 22px; padding: 0 12px; line-height: 20px; }
.tabs .on { background: linear-gradient(#c9cccd, #fff); color: #2b2b2b; border: 1px solid #fff; border-bottom: 0; padding: 0 11px; }
.tabs .latin { font-size: 16px; }
.tabs .mini { margin-left: 16px; }

/* ribbon */
.ribbon { height: 124px; padding-left: 1px; display: flex; background: linear-gradient(#dcdcdc, #999); border-bottom: 1px solid #ddd; }
.panel { flex: none; display: flex; flex-direction: column; background: #fff; border-right: 1px solid #8f8f8f; }
.panel > .body { height: 101px; padding-top: 6px; display: flex; }
.panel h2 { position: relative; flex: 1; display: flex; align-items: center; justify-content: center; gap: 9px; margin-right: 2px; background: #eee; border-top: 1px solid #d0d0d0; border-bottom: 1px solid #d0d0d0; }
.launch { position: absolute; right: 5px; top: 8px; }
.p-draw { width: 264px; } .p-modify { width: 284px; } .p-layers { width: 267px; }
.p-annot { width: 148px; } .p-block { width: 168px; } .p-props { width: 256px; }
.p-group { width: 85px; } .p-util { width: 125px; } .p-clip { width: 94px; border-right: 0; }
.big { display: flex; flex-direction: column; align-items: center; height: 80px; white-space: nowrap; }
.big svg:first-child { margin-bottom: 6px; }
.big svg:last-child:not(:first-child) { margin-top: 4px; }
.w46 { width: 46px; } .w48 { width: 48px; } .w54 { width: 54px; } .w56 { width: 56px; } .w90 { width: 90px; }
.stack { display: flex; flex-direction: column; gap: 4px; }
.tool { height: 27px; display: flex; align-items: center; gap: 7px; white-space: nowrap; text-align: left; }
.tool .dd { margin-left: 8px; }
.tool .near { margin-left: 4px; }
.sq, .split { width: 29px; height: 27px; border: 1px solid #c4c4c4; background: linear-gradient(#fff, #ededed); display: flex; align-items: center; justify-content: center; }
.sq.on { border-color: #1f5fa8; background: #a9cdf3; }
.split { width: 44px; justify-content: stretch; }
.split button { flex: 1; height: 100%; display: flex; align-items: center; justify-content: center; }
.split button:last-child { flex: 0 0 14px; border-left: 1px solid #c4c4c4; }
.p-draw .body { padding-left: 4px; }
.p-draw .stack { margin-left: 2px; }
.p-modify > .body { display: grid; grid-template-columns: 74px 75px 89px 29px; grid-auto-rows: 27px; row-gap: 4px; padding-left: 6px; align-content: start; }
.p-layers > .body { flex-direction: column; gap: 4px; padding: 7px 3px 0 2px; }
.layrow { display: flex; gap: 6px; }
.pair { display: flex; }
.pair .sq + .sq { border-left: 0; }
.combo { height: 27px; padding: 0 5px 0 2px; border: 1px solid #c4c4c4; background: linear-gradient(#fdfdfd, #ebebeb); display: flex; align-items: center; }
.combo select { flex: 1; min-width: 0; appearance: none; height: 25px; line-height: 22px; padding-bottom: 1px; }
.combo.icons { gap: 3px; padding: 0 3px 0 4px; }
.swatch { width: 19px; height: 19px; border: 1px solid #000; background: #fff; flex: none; }
.icons .swatch { margin: 0 3px 0 4px; }
.rule { width: 80px; height: 1px; background: #222; margin: 0 2px; }
.rule.short { width: 74px; margin-left: 8px; }
.p-annot > .body { padding-left: 2px; gap: 6px; }
.p-block > .body { padding-left: 3px; gap: 4px; }
.p-props > .body { display: grid; grid-template-columns: 20px 225px; grid-auto-rows: 27px; gap: 4px 3px; padding: 7px 0 0 4px; align-content: start; align-items: center; }
.p-props .swatch { margin-right: 4px; }
.p-group > .body { gap: 2px; padding-left: 1px; }
.p-util > .body { padding-left: 1px; }
.p-clip > .body { padding-left: 3px; gap: 2px; }

/* drawing tabs */
.docs { height: 34px; padding-left: 19px; display: flex; align-items: flex-end; background: linear-gradient(#a5a5a5, #8c8c8c); border-bottom: 1px solid #aaa; color: #222; }
.doc { position: relative; width: 170px; height: 28px; padding: 0 24px 0 21px; display: flex; align-items: center; justify-content: space-between; }
.docshape { position: absolute; left: 0; top: 0; }
.doc a, .doc button { position: relative; color: inherit; text-decoration: none; }
.newdoc { margin-bottom: 4px; }

/* work area */
.work { flex: 1; display: flex; padding: 7px 5px 1px 0; background: #666; }
.side { width: 365px; flex: none; display: flex; flex-direction: column; background: #9d9d9d; border-radius: 0 5px 3px 3px; color: #000; }
.side > h2 { height: 25px; padding-left: 9px; line-height: 26px; font-size: 16px; border-left: 3px dotted #555; }
.eq { flex: 1; padding: 0 17px 4px 5px; display: flex; flex-direction: column; background: #f0f0f0; border-radius: 4px; font: 13px/16px "Liberation Sans", sans-serif; }
.eqrow { height: 26px; padding: 0 1px 0 2px; display: flex; align-items: center; gap: 7px; }
.push { margin-left: auto; }
fieldset { --inset: 0px; margin: 0; min-width: 0; border: 1px solid #d9d9d9; padding: 0; }
legend { height: 16px; padding: 0 3px; margin-left: calc(5px - var(--inset)); }
.shapes { --inset: 6px; margin-top: 6px; padding: 1px 4px 1px 6px; display: grid; gap: 5px; }
.row { display: flex; gap: 5px; }
.row label { width: 60px; line-height: 24px; }
.row.off label { padding-left: 5px; color: #999; }
.sel { position: relative; flex: 1; display: flex; height: 24px; background: #fff; border: 1px solid #444; }
.sel select { flex: 1; appearance: none; }
.sel > svg { position: absolute; right: 4px; top: 9px; pointer-events: none; }
.sel.size { border-color: #c6c6c6; color: #888; }
.sel.size select { margin: 2px 23px 2px 2px; background: #efefef; }
.sel.gray { background: #e1e1e1; border-color: #999; }
.btn { height: 26px; background: #e1e1e1; border: 1px solid #a0a0a0; }
.btn:disabled { background: #ccc; border-color: #bfbfbf; color: #838383; }
.row .btn { width: 82px; height: 21px; }
.ename { --inset: 4px; margin-top: 6px; padding: 3px 4px 2px; display: flex; }
.ptabs { margin-top: 8px; height: 24px; display: flex; align-items: flex-end; }
.ptabs button { width: 85px; height: 22px; border: 1px solid #d9d9d9; border-bottom: 0; }
.ptabs .on { width: 79px; height: 24px; background: #fff; }
.page { flex: 1; width: 341px; background: #fff; border: 1px solid #d9d9d9; border-top: 0; }
.dialog { width: 342px; overflow: hidden; background: #fff; padding: 20px 0 15px 17px; display: flex; flex-direction: column; gap: 6px; }
.acts { display: flex; gap: 16px; padding-left: 1px; margin-bottom: 9px; }
.acts .btn { flex: 0 0 108px; }
.btn.new { border: 2px solid #1f6fb5; }
.cols { display: flex; gap: 14px; margin-bottom: 1px; }
.loc { flex: 0 0 172px; }
.right { flex: 0 0 172px; display: flex; flex-direction: column; gap: 5px; }
.loc, .rot { --inset: 12px; padding: 9px 0 0 12px; }
.spec { display: block; width: 136px; margin-bottom: 15px; }
.dialog input[type="text"] { width: 94px; height: 24px; padding: 0 3px 2px; border: 1px solid #ababab; color: #666; background: #fff; }
.coords { display: grid; grid-template-columns: 43px 94px; row-gap: 10px; padding-bottom: 18px; line-height: 24px; }
.angle { display: grid; grid-template-columns: 54px 94px; padding: 0 0 12px 3px; line-height: 24px; }
.ori { --inset: 15px; padding: 10px 0 18px 15px; }
.ori select { appearance: none; width: 136px; height: 24px; padding-left: 3px; background: #ccc; border: 1px solid #bfbfbf; color: #777; opacity: 1; display: block; }
.opt, .ref, .pve { width: 358px; }
.check { display: flex; align-items: center; gap: 3px; color: #777; }
.check input { appearance: none; width: 16px; height: 16px; border: 1px solid #c4c4c4; background: #fff; }
.opt { --inset: 11px; padding: 12px 0 12px 11px; }
.ref { --inset: 11px; display: flex; padding: 6px 0 12px 11px; align-items: center; }
.ref .check { width: 180px; }
.ref .val { width: 64px; color: #999; }
.pve { --inset: 56px; display: flex; padding: 5px 0 13px 56px; gap: 48px; }
.pve .btn { width: 98px; }

/* drawing area */
.draw { flex: 1; min-width: 0; margin: -1px 0 0 6px; display: flex; flex-direction: column; border: 1px solid #bbb; border-right: 2px solid #fff; border-bottom: 0; }
.view { position: relative; flex: 1; background: #212830; border-bottom: 1px solid #666; }
.vlabel { position: absolute; left: 3px; top: 4px; color: #fff; font-size: 12px; }
.vwin { position: absolute; right: 9px; top: 9px; }
.nav { position: absolute; right: 3px; top: 27px; background: #5b6266; border-radius: 3px; }
.ucs { position: absolute; left: 14px; bottom: 13px; }
.cross { position: absolute; right: 189px; bottom: 0; }
.cmd { position: absolute; z-index: 2; left: 304px; right: 303px; bottom: -3px; height: 33px; display: flex; align-items: center; padding-right: 6px; background: #bcbdbf; border: 1px solid #8c8c8c; border-radius: 3px; color: #555; }
.cmdl { width: 67px; height: 100%; padding: 0 4px; display: flex; align-items: center; gap: 11px; background: linear-gradient(#6c6e70, #3c3e40); }
.wrench { margin-left: auto; }
.prompt { margin-left: 6px; display: flex; align-items: center; gap: 4px; }
.cmd input { flex: 1; padding-left: 9px; font-size: 16px; font-style: italic; font-weight: 300; outline: 0; }
.cmd input::placeholder { color: #6e6e6e; opacity: 1; }
.layouts { height: 19px; display: flex; background: #efefef; color: #000; font-size: 14px; }
.nb { width: 18px; display: flex; align-items: center; justify-content: center; border: 1px solid #c8c8c8; border-left: 0; }
.lt { position: relative; width: 60px; margin-left: -2px; padding-right: 4px; }
.lt svg { position: absolute; left: 0; top: 0; width: 60px; height: 19px; overflow: visible; }
.lt span { position: relative; }
.model { color: #fff; z-index: 1; margin-left: 0; padding-right: 2px; }

/* status bar */
.status { height: 22px; display: flex; border-top: 1px solid #000; background: linear-gradient(#979797, #727272); color: #111; }
.xyz { width: 240px; padding-left: 12px; font: 13px/22px "Liberation Mono", monospace; white-space: pre; background: linear-gradient(#8a8a8a, #6c6c6c); border: 1px solid #999; border-width: 1px 0; }
.sb { display: flex; }
.sb button { width: 22px; display: flex; align-items: center; justify-content: center; border-right: 1px solid #666; border-left: 1px solid #ccc; background: linear-gradient(#bbb, #939393); }
.sb button svg { width: 20px; height: 20px; }
.sb .on { background: linear-gradient(#d5f3f8, #86ccd9); }
.sb .tp { background: #9fcdf3; }
.end { margin-left: auto; }
.sb .txt { width: 36px; font-size: 14px; }
.gap22 { width: 22px; }
.gap5 { width: 5px; }
.sb .scale { width: 60px; font: 14px/20px "Liberation Mono", monospace; }
.sb .scale .dd, .sb .nar svg { width: 8px; height: 6px; }
.sb .wide { width: 37px; background: #888; border: 2px solid #b0b0b0; }
.sb .nar { width: 12px; }
.grip { margin: 5px 0 0 4px; }
```
